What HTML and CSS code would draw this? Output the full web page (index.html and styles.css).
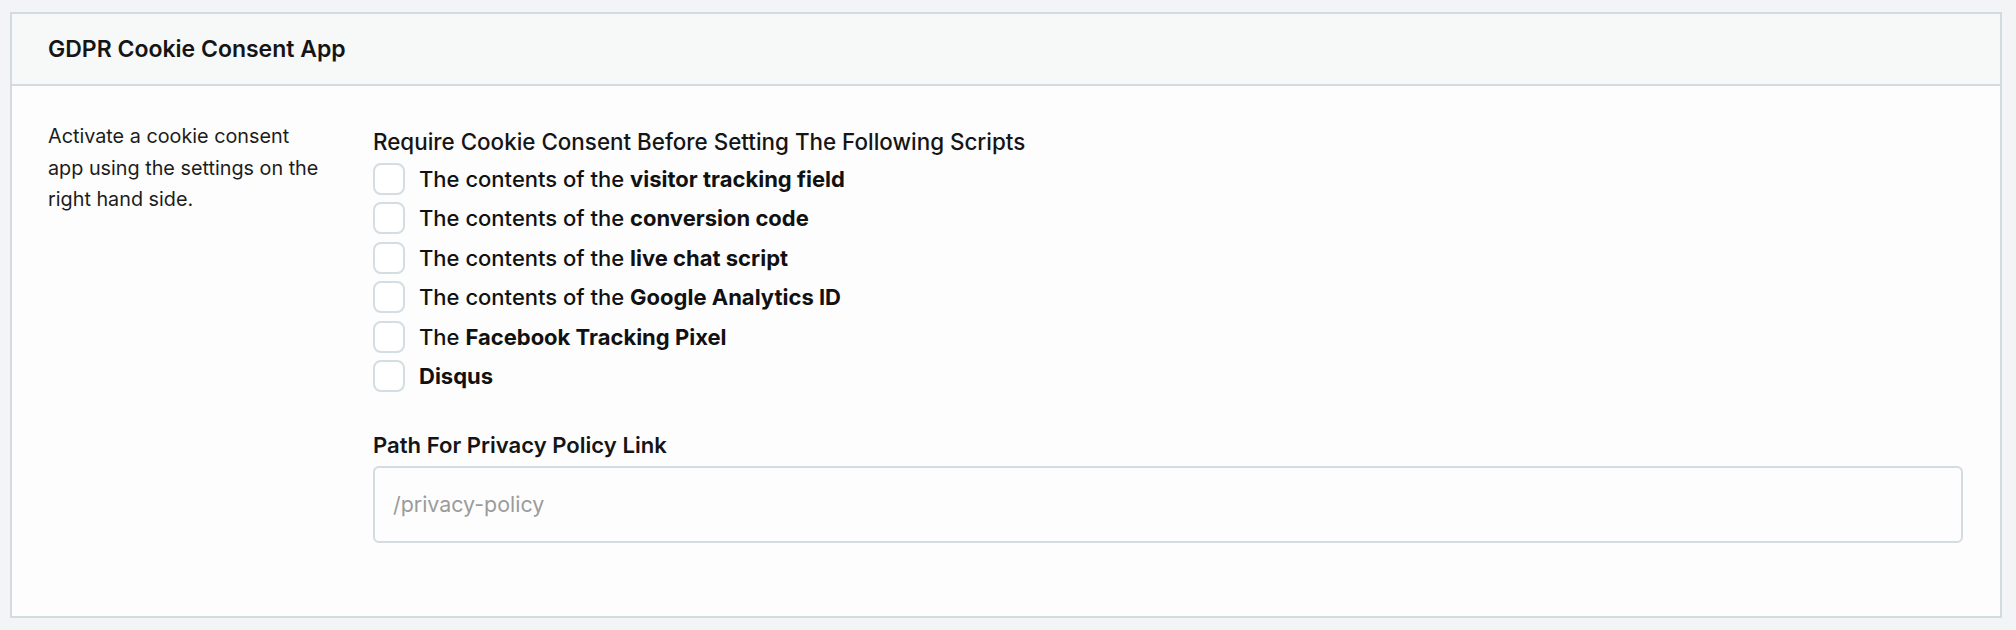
FILE: index.html
```html
<!DOCTYPE html>
<html lang="en">
<head>
<meta charset="utf-8">
<title>GDPR Cookie Consent App</title>
<link rel="stylesheet" href="styles.css">
</head>
<body>
<div class="card">
  <div class="card-header">
    <h3 class="card-title">GDPR Cookie Consent App</h3>
  </div>
  <div class="card-body">
    <div class="desc">
      <p>Activate a cookie consent app using the settings on the right hand side.</p>
    </div>
    <div class="settings">
      <div class="group">
        <div class="group-label">Require Cookie Consent Before Setting The Following Scripts</div>
        <ul class="checks">
          <li class="check"><span class="box"></span><span class="check-label">The contents of the <b>visitor tracking field</b></span></li>
          <li class="check"><span class="box"></span><span class="check-label">The contents of the <b>conversion code</b></span></li>
          <li class="check"><span class="box"></span><span class="check-label">The contents of the <b>live chat script</b></span></li>
          <li class="check"><span class="box"></span><span class="check-label">The contents of the <b>Google Analytics ID</b></span></li>
          <li class="check"><span class="box"></span><span class="check-label">The <b>Facebook Tracking Pixel</b></span></li>
          <li class="check"><span class="box"></span><span class="check-label"><b>Disqus</b></span></li>
        </ul>
      </div>
      <div class="group group-path">
        <label class="field-label" for="path">Path For Privacy Policy Link</label>
        <input class="field" id="path" type="text" placeholder="/privacy-policy">
      </div>
    </div>
  </div>
</div>
</body>
</html>
```

FILE: styles.css
```css
* { box-sizing: border-box; }

html, body {
  margin: 0;
  padding: 0;
  background: #f3f4f6;
}

body {
  font-family: "Inter", "Liberation Sans", sans-serif;
  color: #161616;
  padding: 12px 14px 12px 10px;
}

.card {
  width: 1992px;
  background: #fdfdfd;
  border: 2px solid #d2dbe0;
}

.card-header {
  height: 72px;
  padding: 0 36px;
  display: flex;
  align-items: center;
  background: #f7f8f8;
  border-bottom: 2px solid #d2dbe0;
}

.card-title {
  margin: 0;
  font-size: 23px;
  font-weight: 600;
  line-height: 26px;
  color: #151515;
}

.card-body {
  display: flex;
  padding: 35px 37px 73px 36px;
}

.desc {
  width: 290px;
  flex: none;
}

.desc p {
  margin: 0;
  width: 275px;
  font-size: 19.8px;
  line-height: 31.5px;
  color: #1c1c1c;
}

.settings {
  flex: 1;
  margin-left: 35px;
  padding-top: 8px;
}

.group-label,
.field-label {
  display: block;
  font-size: 22.4px;
  line-height: 26px;
  font-weight: 500;
  color: #151515;
}

.field-label {
  font-size: 22.1px;
  font-weight: 600;
}

.checks {
  list-style: none;
  margin: 8px 0 0;
  padding: 0;
  display: flex;
  flex-direction: column;
  gap: 7.4px;
}

.check {
  display: flex;
  align-items: center;
  height: 32px;
}

.box {
  width: 32px;
  height: 32px;
  flex: none;
  border: 2px solid #d3dde2;
  border-radius: 8px;
  background: #ffffff;
}

.check-label {
  margin-left: 14px;
  font-size: 22px;
  font-weight: 500;
  color: #111;
}

.check-label b {
  font-weight: 700;
}

.group-path {
  margin-top: 40px;
}

.field {
  display: block;
  width: 100%;
  height: 77px;
  margin-top: 8px;
  padding: 0 18px;
  border: 2px solid #d3dcdf;
  border-radius: 6px;
  background: #fdfdfd;
  font-family: inherit;
  font-size: 21.4px;
  color: #222;
  outline: none;
}

.field::placeholder {
  color: #9b9b9b;
}
```
